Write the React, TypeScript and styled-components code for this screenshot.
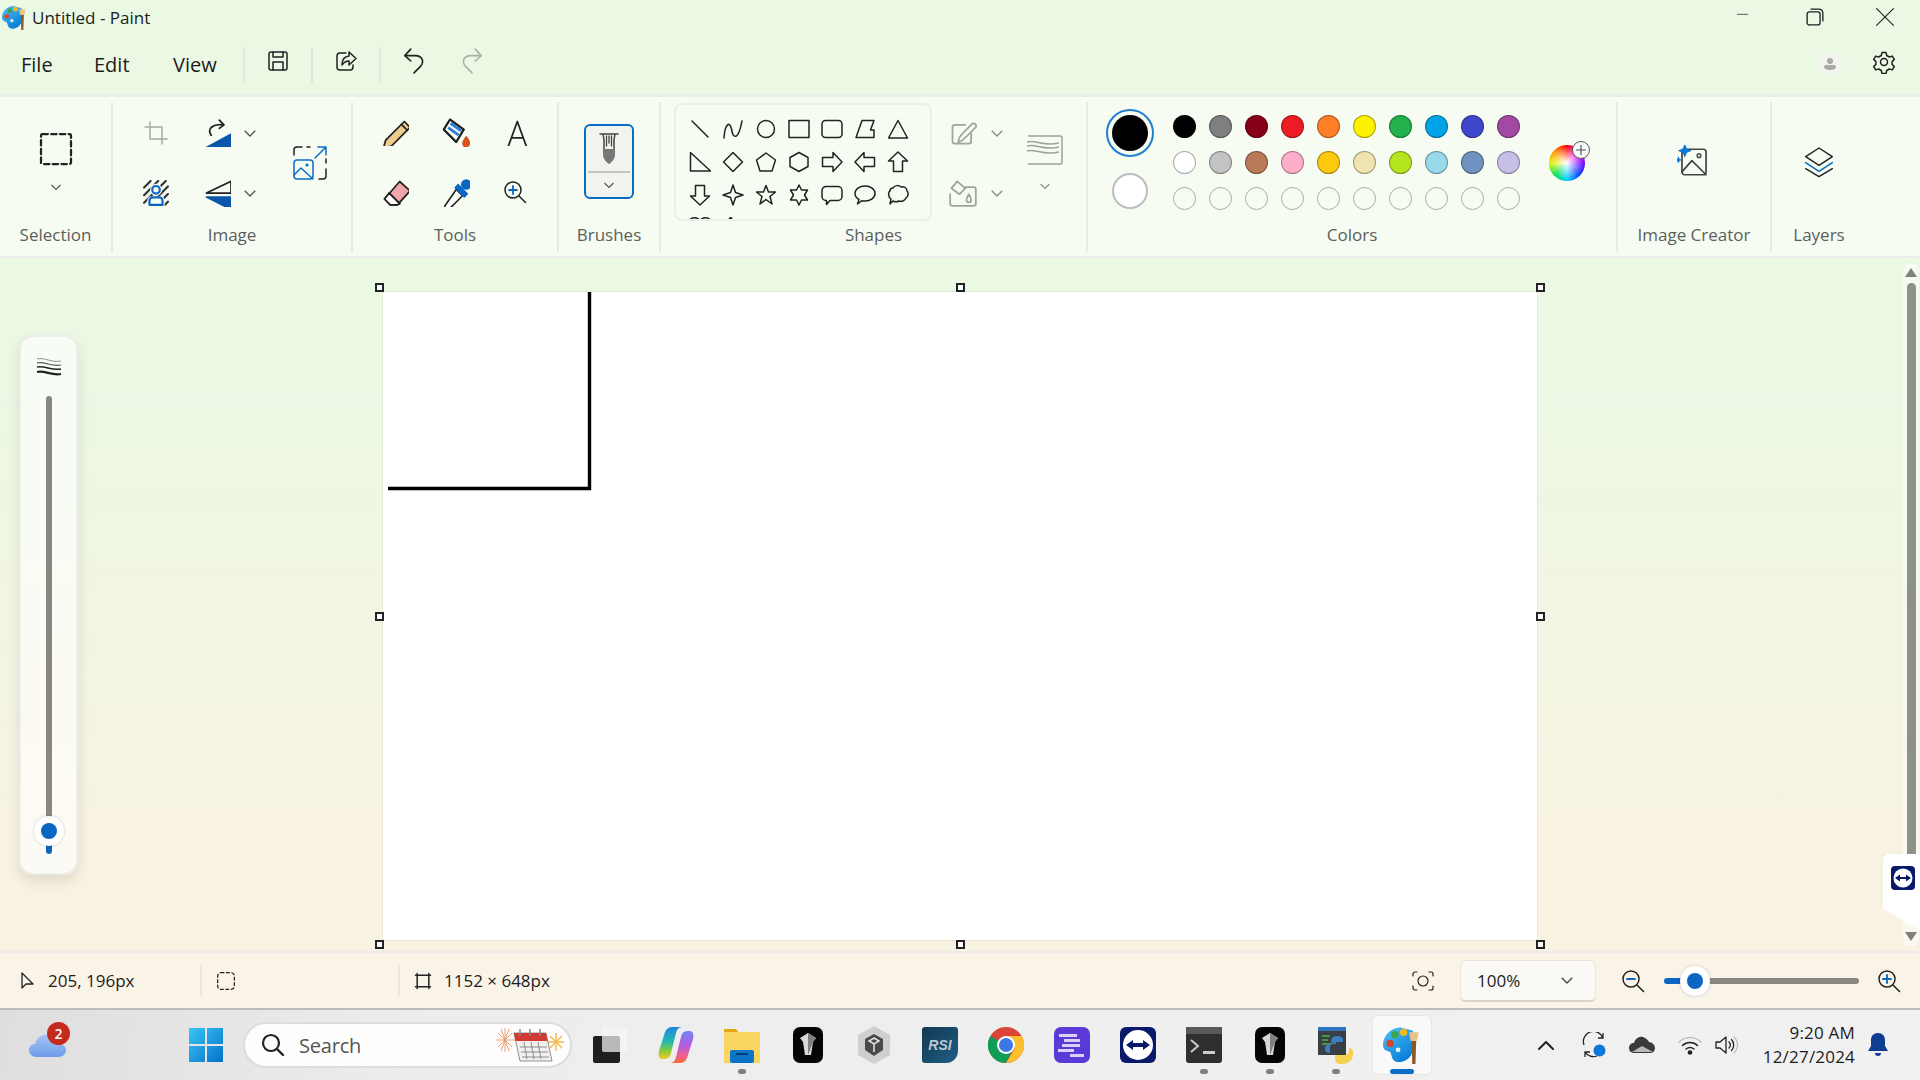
import React from 'react';
import styled, { createGlobalStyle } from 'styled-components';

const GlobalStyle = createGlobalStyle`
  html, body { margin: 0; padding: 0; width: 1920px; height: 1080px; overflow: hidden; }
  body { font-family: "Open Sans", "Noto Sans", "Liberation Sans", sans-serif; color: #1c1c1c; }
  * { box-sizing: border-box; }
`;

const Shell = styled.div`
  width: 1920px;
  height: 1080px;
  display: flex;
  flex-direction: column;
`;

const PaintWindow = styled.div`
  height: 1008px;
  display: flex;
  flex-direction: column;
  background: linear-gradient(180deg, #ebf8e4 0%, #ebf8e4 38%, #f2f5e3 62%, #f8f2e2 84%, #f9f2e3 100%);
`;

const TitleBar = styled.div`
  height: 34px;
  margin-bottom: 2px;
  display: flex;
  align-items: center;
  padding: 0 0 0 2px;
`;

const TitleText = styled.span`
  font-size: 17px;
  margin-left: 5px;
  margin-right: auto;
`;

const WindowButton = styled.div`
  width: 70px;
  height: 30px;
  display: flex;
  align-items: center;
  justify-content: center;
`;

const MenuBar = styled.div`
  height: 59px;
  display: flex;
  align-items: center;
  padding: 0 24px 2px 21px;
`;

const MenuItem = styled.span<{ $w: number }>`
  font-size: 20px;
  width: ${(p) => p.$w}px;
`;

const MenuSep = styled.div`
  width: 2px;
  height: 36px;
  background: #dfe8da;
`;

const MenuButton = styled.div<{ $w: number }>`
  width: ${(p) => p.$w}px;
  display: flex;
  justify-content: center;
  margin-bottom: 8px;
`;

const Avatar = styled.div`
  width: 23px;
  height: 23px;
  border-radius: 50%;
  background: #f2f5ef;
  margin-left: auto;
  margin-right: 31px;
  margin-bottom: 2px;
  display: flex;
  align-items: center;
  justify-content: center;
`;

const GearSlot = styled.div`
  margin-bottom: 6px;
`;

const Ribbon = styled.div`
  height: 163px;
  display: flex;
  background: #f6fcf2;
  border-top: 2px solid #ececec;
  border-bottom: 2px solid #ececec;
`;

const Group = styled.div<{ $w: number; $last?: boolean }>`
  width: ${(p) => p.$w}px;
  height: 150px;
  margin-top: 5px;
  display: flex;
  flex-direction: column;
  border-right: 2px solid ${(p) => (p.$last ? 'transparent' : '#e7ebe3')};
`;

const GroupBody = styled.div`
  height: 121px;
`;

const GroupLabel = styled.div`
  height: 24px;
  line-height: 24px;
  text-align: center;
  font-size: 17px;
  color: #5c5f5b;
`;

const SelectionColumn = styled.div`
  height: 100%;
  display: flex;
  flex-direction: column;
  align-items: center;
  padding-top: 29px;
  gap: 14px;
`;

const ImageGrid = styled.div`
  display: grid;
  grid-template-columns: 60px 76px 1fr;
  grid-template-rows: 60px 60px;
  padding: 1px 0 0 13px;
`;

const ToolsGrid = styled.div`
  display: grid;
  grid-template-columns: repeat(3, 60px);
  grid-template-rows: 60px 60px;
  padding: 0 0 0 12px;
`;

const Cell = styled.div`
  display: flex;
  align-items: center;
  justify-content: center;
`;

const SplitCell = styled.div`
  display: flex;
  align-items: center;
  padding-left: 8px;
`;

const SplitIcon = styled.div`
  width: 46px;
  display: flex;
  justify-content: center;
`;

const SplitChevron = styled.div`
  width: 20px;
  display: flex;
  justify-content: center;
`;

const ResizeCell = styled.div`
  grid-column: 3;
  grid-row: 1 / span 2;
  display: flex;
  align-items: center;
  justify-content: center;
  padding-left: 7px;
`;

const BrushButton = styled.div`
  width: 50px;
  height: 75px;
  margin: 22px 0 0 25px;
  border: 2px solid #0a6cc4;
  border-radius: 6px;
  background: #f1f3ee;
  display: flex;
  flex-direction: column;
  align-items: center;
`;

const BrushTop = styled.div`
  height: 47px;
  width: 42px;
  display: flex;
  align-items: center;
  justify-content: center;
  border-bottom: 2px solid #c4c7c0;
`;

const BrushBottom = styled.div`
  flex: 1;
  display: flex;
  align-items: center;
`;

const ShapesLayout = styled.div`
  display: flex;
  padding: 1px 0 0 13px;
`;

const ShapesBox = styled.div`
  width: 258px;
  height: 118px;
  border: 2px solid #ebefe7;
  border-radius: 8px;
  overflow: hidden;
  padding: 7px 0 0 7px;
`;

const ShapesGrid = styled.div`
  display: grid;
  grid-template-columns: repeat(7, 33px);
  grid-auto-rows: 33px;
`;

const ShapeOptions = styled.div`
  display: grid;
  grid-template-columns: 54px 14px 82px;
  grid-template-rows: 60px 60px;
  margin-left: 4px;
`;

const SizeCell = styled.div`
  grid-column: 3;
  grid-row: 1 / span 2;
  display: flex;
  flex-direction: column;
  align-items: center;
  padding-top: 32px;
  gap: 15px;
`;

const ColorsLayout = styled.div`
  display: flex;
  padding-left: 18px;
`;

const ActiveColors = styled.div`
  width: 48px;
  display: flex;
  flex-direction: column;
  align-items: center;
  padding-top: 7px;
`;

const ForegroundRing = styled.div`
  width: 48px;
  height: 48px;
  border-radius: 50%;
  border: 2px solid #1f7fd0;
  display: flex;
  align-items: center;
  justify-content: center;
`;

const ForegroundDot = styled.div`
  width: 36px;
  height: 36px;
  border-radius: 50%;
  background: #000;
`;

const BackgroundDot = styled.div`
  width: 36px;
  height: 36px;
  margin-top: 16px;
  border-radius: 50%;
  background: #fff;
  border: 2px solid #bdbdbd;
`;

const SwatchGrid = styled.div`
  display: grid;
  grid-template-columns: repeat(10, 36px);
  grid-auto-rows: 36px;
  margin: 6px 0 0 12px;
  height: 108px;
`;

const SwatchCell = styled.div`
  display: flex;
  align-items: center;
  justify-content: center;
`;

const Swatch = styled.div<{ $c?: string }>`
  width: 23px;
  height: 23px;
  border-radius: 50%;
  background: ${(p) => p.$c ?? 'transparent'};
  border: 1.5px solid ${(p) => (p.$c ? 'rgba(0,0,0,0.32)' : '#a9aca6')};
`;

const ColorWheel = styled.div`
  position: relative;
  width: 36px;
  height: 36px;
  margin: 43px 0 0 23px;
  border-radius: 50%;
  background: radial-gradient(circle, #ffffff 0%, rgba(255, 255, 255, 0) 68%),
    conic-gradient(#ff0000, #ff00e0, #7a00ff, #0040ff, #00d0ff, #00e050, #e8f000, #ff9000, #ff0000);
`;

const WheelPlus = styled.div`
  position: absolute;
  top: -4px;
  right: -5px;
  width: 18px;
  height: 18px;
  border-radius: 50%;
  background: #f8f8f8;
  border: 1.5px solid #55585a;
  display: flex;
  align-items: center;
  justify-content: center;
`;

const BigIconCell = styled.div`
  height: 100%;
  display: flex;
  align-items: center;
  justify-content: center;
  padding-bottom: 1px;
`;

const Workspace = styled.div`
  position: relative;
  height: 693px;
  display: grid;
  grid-template-columns: 383px 1154px 1fr;
`;

const SidePanel = styled.div`
  width: 59px;
  height: 540px;
  margin: 77px 0 0 19px;
  border-radius: 14px;
  border: 2px solid #ecedea;
  background: rgba(255, 255, 255, 0.62);
  box-shadow: 0 6px 14px rgba(0, 0, 0, 0.1);
  display: flex;
  flex-direction: column;
  align-items: center;
  padding-top: 20px;
`;

const SideTrack = styled.div`
  position: relative;
  width: 6px;
  height: 458px;
  margin-top: 19px;
  border-radius: 3px;
  background: linear-gradient(180deg, #8a8780 0 94%, #0a66c2 94% 100%);
`;

const SliderThumb = styled.div`
  position: absolute;
  width: 30px;
  height: 30px;
  border-radius: 50%;
  background: #fff;
  box-shadow: 0 0 3px rgba(0, 0, 0, 0.2);
  display: flex;
  align-items: center;
  justify-content: center;
  &::after {
    content: '';
    width: 16px;
    height: 16px;
    border-radius: 50%;
    background: #0a66c2;
  }
`;

const SideThumb = styled(SliderThumb)`
  left: -12px;
  bottom: 8px;
`;

const CanvasFrame = styled.div`
  position: relative;
  width: 1154px;
  height: 648px;
  margin-top: 34px;
  background: #fff;
  box-shadow: 0 0 0 1px rgba(120, 130, 110, 0.1);
`;

const Handle = styled.div<{ $x: number; $y: number }>`
  position: absolute;
  width: 9px;
  height: 9px;
  background: #fff;
  border: 2px solid #222;
  left: ${(p) => (p.$x === 0 ? '-8px' : p.$x === 1 ? 'calc(50% - 4.5px)' : 'calc(100% - 1px)')};
  top: ${(p) => (p.$y === 0 ? '-9px' : p.$y === 1 ? 'calc(50% - 4.5px)' : '100%')};
`;

const ScrollRail = styled.div`
  justify-self: end;
  width: 16px;
  height: 684px;
  margin: 5px 1px 0 0;
  background: rgba(255, 255, 255, 0.45);
  border-radius: 8px;
  display: flex;
  flex-direction: column;
  align-items: center;
  padding: 5px 0 6px;
`;

const ScrollThumb = styled.div`
  width: 9px;
  flex: 1;
  margin: 6px 0 8px;
  border-radius: 5px;
  background: #8c928a;
`;

const ViewerTab = styled.div`
  position: absolute;
  right: 0;
  top: 596px;
  width: 37px;
  height: 76px;
  background: #fff;
  border-top-left-radius: 5px;
  box-shadow: 0 0 0 1px rgba(0, 0, 0, 0.06);
  clip-path: polygon(0 0, 100% 0, 100% 100%, 0 72%);
  padding: 12px 0 0 8px;
`;

const StatusBar = styled.div`
  height: 57px;
  display: flex;
  align-items: center;
  background: #faf3e8;
  border-top: 2px solid #ececec;
  font-size: 17px;
  padding-right: 19px;
`;

const StatusCell = styled.div<{ $w: number; $pad: number }>`
  width: ${(p) => p.$w}px;
  height: 32px;
  display: flex;
  align-items: center;
  gap: 10px;
  padding-left: ${(p) => p.$pad}px;
  border-right: 2px solid #ebe6dd;
`;

const StatusPlain = styled(StatusCell)`
  border-right: none;
  gap: 11px;
`;

const ZoomTools = styled.div`
  margin-left: auto;
  display: flex;
  align-items: center;
`;

const ZoomDropdown = styled.div`
  width: 136px;
  height: 42px;
  margin: 0 25px;
  display: flex;
  align-items: center;
  justify-content: space-between;
  padding: 0 21px 0 16px;
  background: #fbf9f5;
  border: 1.5px solid #ebe4d9;
  border-bottom: 2px solid #d9d2c6;
  border-radius: 5px;
`;

const ZoomSlider = styled.div`
  position: relative;
  width: 195px;
  height: 6px;
  margin: 0 18px 0 19px;
  border-radius: 3px;
  background: linear-gradient(90deg, #0a66c2 0 16%, #8a8780 16% 100%);
`;

const ZoomThumb = styled(SliderThumb)`
  left: 16px;
  top: -12px;
`;

const Taskbar = styled.div`
  height: 72px;
  display: flex;
  align-items: center;
  background: linear-gradient(100deg, #dedede 0%, #ededed 22%, #f1f1f1 100%);
  border-top: 2px solid #bcbcbc;
  padding-right: 19px;
`;

const WeatherArea = styled.div`
  position: relative;
  width: 188px;
  padding-left: 29px;
`;

const Badge = styled.div`
  position: absolute;
  left: 47px;
  top: -10px;
  width: 23px;
  height: 23px;
  border-radius: 50%;
  background: #c42b1c;
  color: #fff;
  font-size: 14px;
  font-weight: 600;
  text-align: center;
  line-height: 23px;
`;

const SearchBox = styled.div`
  width: 329px;
  height: 46px;
  margin-left: 19px;
  display: flex;
  align-items: center;
  padding: 0 6px 0 16px;
  background: #fdfdfd;
  border: 2px solid #dcdcdc;
  border-radius: 23px;
`;

const SearchText = styled.span`
  margin-left: 14px;
  margin-right: auto;
  font-size: 20px;
  color: #555;
  letter-spacing: -0.2px;
`;

const AppStrip = styled.div`
  display: flex;
  margin-left: 5px;
`;

const AppTile = styled.div<{ $active?: boolean }>`
  position: relative;
  width: ${(p) => (p.$active ? 58 : 66)}px;
  height: 58px;
  margin: ${(p) => (p.$active ? '0 4px' : '0')};
  display: flex;
  align-items: center;
  justify-content: center;
  border-radius: 5px;
  background: ${(p) => (p.$active ? '#f9f9f9' : 'transparent')};
  box-shadow: ${(p) => (p.$active ? '0 0 0 1px #e6e6e6' : 'none')};
`;

const RunDot = styled.div`
  position: absolute;
  left: calc(50% - 4px);
  bottom: 0;
  width: 8px;
  height: 5px;
  border-radius: 3px;
  background: #7f7f7f;
`;

const ActiveBar = styled.div`
  position: absolute;
  left: calc(50% - 12px);
  bottom: 0;
  width: 24px;
  height: 5px;
  border-radius: 3px;
  background: #0a6cc4;
`;

const RsiTile = styled.div`
  width: 36px;
  height: 36px;
  display: flex;
  align-items: center;
  justify-content: center;
  border-radius: 3px 3px 12px 3px;
  background: linear-gradient(135deg, #12394f, #1f5e85);
  color: #b8c8d2;
  font: italic 700 14px "Liberation Sans", sans-serif;
`;

const Tray = styled.div`
  display: flex;
  align-items: center;
  margin-left: 87px;
`;

const TrayIcon = styled.div<{ $w: number }>`
  width: ${(p) => p.$w}px;
  display: flex;
  justify-content: center;
`;

const Clock = styled.div`
  margin-left: auto;
  text-align: right;
  font-size: 17px;
  line-height: 24px;
  letter-spacing: 0.2px;
`;

const BellArea = styled.div`
  width: 46px;
  display: flex;
  justify-content: center;
`;

type IconProps = { s?: number; w?: number; h?: number; vb?: string; children?: React.ReactNode };

const Svg: React.FC<IconProps> = ({ s = 24, w, h, vb = '0 0 24 24', children }) => (
  <svg
    width={w ?? s}
    height={h ?? s}
    viewBox={vb}
    fill="none"
    stroke="#222"
    strokeWidth={1.5}
    strokeLinecap="round"
    strokeLinejoin="round"
    style={{ display: 'block' }}
  >
    {children}
  </svg>
);

const Chevron: React.FC<{ s?: number; c?: string }> = ({ s = 12, c = '#555' }) => (
  <svg width={s} height={s} viewBox="0 0 12 12" fill="none" stroke={c} strokeWidth={1.2} style={{ display: 'block' }}>
    <path d="M1.5 4 6 8.5 10.5 4" />
  </svg>
);

const PaintLogo: React.FC<{ s: number }> = ({ s }) => (
  <svg width={s} height={s} viewBox="0 0 24 24" style={{ display: 'block' }}>
    <defs>
      <linearGradient id="palette" x1="0" y1="0" x2="0.6" y2="1">
        <stop offset="0" stopColor="#4fc3f7" />
        <stop offset="1" stopColor="#0b7fd6" />
      </linearGradient>
    </defs>
    <path d="M11 1C5 1 0 6 0 12c0 3 2 3.5 3.5 4 2 .6 1.5 2.5 2.5 4.5C7 23 10 23 12 22.5c5-1 7-5 7-9.5V3z" fill="url(#palette)" />
    <circle cx="4.5" cy="11" r="2.3" fill="#d9472b" />
    <circle cx="7.5" cy="5.5" r="2.3" fill="#3fa34d" />
    <circle cx="13" cy="4" r="2.3" fill="#f6b916" />
    <circle cx="9.5" cy="15" r="1.5" fill="#dff3ff" />
    <path d="M18 9h3l-.5 15h-2z" fill="#8a5a2b" />
    <path d="M16.5 4h6l-1 5.5h-4z" fill="#e8c48a" />
  </svg>
);

const SaveIcon = () => (
  <Svg>
    <path d="M5 3h14a2 2 0 0 1 2 2v14a2 2 0 0 1-2 2H5a2 2 0 0 1-2-2V5a2 2 0 0 1 2-2z" />
    <path d="M7 3v5h10V3M7 21v-8h10v8" />
  </Svg>
);

const ShareIcon = () => (
  <Svg>
    <path d="M12 4H6a3 3 0 0 0-3 3v11a3 3 0 0 0 3 3h10a3 3 0 0 0 3-3v-2" />
    <path d="M15 3l7 6.5-7 6.5v-4c-3 0-5 1-7 4 0-5 2-8.5 7-9z" />
  </Svg>
);

const UndoIcon = () => (
  <Svg s={26}>
    <path d="M9 1 3.5 7 9 12" />
    <path d="M4 7h9c8 0 8 7 5 10l-6 6" />
  </Svg>
);

const RedoIcon = () => (
  <Svg s={26}>
    <g stroke="#a9b2a6">
      <path d="M15 1l5.5 6L15 12" />
      <path d="M20 7h-9c-8 0-8 7-5 10l6 6" />
    </g>
  </Svg>
);

const GearIcon = () => (
  <Svg>
    <circle cx="12" cy="12" r="3.5" />
    <path d="M10 2.5h4l.7 3 2.6 1.5 3-.9 2 3.4-2.2 2.1v2.800l2.200 2.100-2 3.400-3-.9-2.600 1.500-.7 3h-4l-.7-3-2.600-1.500-3 .9-2-3.400 2.200-2.100v-2.800L1.700 9.500l2-3.400 3 .9L9.300 5.500z" />
  </Svg>
);

const SelectIcon: React.FC<{ s?: number; w?: number; h?: number }> = ({ s, w, h }) => (
  <Svg s={s} w={w} h={h}>
    <rect x="2" y="2" width="20" height="20" rx="1" strokeDasharray="3.6 2.2" />
  </Svg>
);

const CropIcon = () => (
  <Svg>
    <g stroke="#a4aaa2">
      <path d="M6 1v17h17M1 6h17v17" />
    </g>
  </Svg>
);

const RotateIcon = () => (
  <Svg s={28}>
    <path d="M2 25 24 13v12z" fill="#0a56aa" stroke="#0a56aa" />
    <path d="M7 14C3 8 9 4 17 5M14 1l4 4-4 3" />
  </Svg>
);

const BgRemoveIcon = () => (
  <Svg s={26}>
    <g stroke="#333" strokeWidth={2}>
      <path d="M1 7 7 1M1 14 14 1M1 21 21 1M6 23 23 6M13 23 23 13M20 23l3-3" />
    </g>
    <circle cx="12" cy="9" r="5.5" fill="#f6fcf2" stroke="none" />
    <path d="M4 24v-5a4 4 0 0 1 4-4h8a4 4 0 0 1 4 4v5z" fill="#f6fcf2" stroke="none" />
    <circle cx="12" cy="9" r="3.5" stroke="#0a66c2" strokeWidth={2} />
    <path d="M6 23v-4a3 3 0 0 1 3-3h6a3 3 0 0 1 3 3v4M6 23h12" stroke="#0a66c2" strokeWidth={2} />
  </Svg>
);

const FlipIcon = () => (
  <Svg s={28}>
    <path d="M24 2 3 12h21z" />
    <path d="M3 15.5h21V26z" fill="#0a56aa" stroke="#0a56aa" />
  </Svg>
);

const ResizeIcon = () => (
  <Svg s={36} vb="0 0 36 36">
    <path d="M2 10V5a3 3 0 0 1 3-3h5M15 2h3M34 24v7a3 3 0 0 1-3 3h-4M34 14v4" />
    <g stroke="#0a6cc4">
      <path d="M23 13 34 2M26 2h8v8" />
      <rect x="2" y="15" width="19" height="19" rx="3" />
      <path d="M2 30l7-7 12 11" />
      <circle cx="15" cy="20" r="0.8" />
    </g>
  </Svg>
);

const PencilIcon = () => (
  <Svg s={28}>
    <path d="M20 3l5 5L9 24l-7 2 2-7z" fill="#efcb8c" />
    <path d="M17.5 5.5l5 5" />
  </Svg>
);

const BucketIcon = () => (
  <Svg s={30}>
    <path d="M8 2 19 10l-6 10L3 10z" fill="#fff" />
    <path d="M8.5 5 17 11M6.5 8.500 15 14.500" stroke="#2c7fd1" strokeWidth={2.4} strokeLinecap="butt" />
    <path d="M8 2 19 10l-6 10L3 10z" />
    <path d="M21 16c-1.5 2.5-2.5 3.5-2.5 5a2.5 2.5 0 0 0 5 0c0-1.5-1-2.5-2.5-5z" fill="#d9531e" stroke="#d9531e" />
  </Svg>
);

const LetterIcon = () => (
  <Svg s={28}>
    <path d="M3 25h6M18 25h7M6 25 14 3l8 22M8.5 17h11" strokeLinecap="butt" />
  </Svg>
);

const EraserIcon = () => (
  <Svg s={28}>
    <path d="M16 3 25 11 14 23H8l-5-5z" fill="#f2a6ab" />
    <path d="M7 13l9 9M12 26h14" />
    <path d="M3 18l4-5 9 9-2 1H8z" fill="#fff" />
  </Svg>
);

const DropperIcon = () => (
  <Svg s={30}>
    <path d="M13 10 18 15 7 26l-4 1 1-4z" fill="#fff" strokeWidth={1.3} />
    <path d="M12 8.5l7.5 7.5 2.5-2.5-7.5-7.5z" fill="#0a66c2" stroke="#0a66c2" strokeWidth={1} />
    <circle cx="21" cy="6" r="3.5" fill="#0a66c2" stroke="#0a66c2" />
  </Svg>
);

const ZoomGlass: React.FC<{ sign: 'plus' | 'minus'; s?: number }> = ({ sign, s = 24 }) => (
  <Svg s={s}>
    <circle cx="10" cy="10" r="8" />
    <path d="M16 16l6.5 6.5" />
    <g stroke="#0a66c2" strokeWidth={1.8}>
      <path d="M6 10h8" />
      {sign === 'plus' && <path d="M10 6v8" />}
    </g>
  </Svg>
);

const BrushIcon = () => (
  <Svg w={24} h={36} vb="0 0 24 36">
    <path d="M3 3h18M6 3l1 6v12M18 3l-1 6v12" stroke="#444" strokeWidth={1.5} />
    <path d="M6 18h12v5c0 5-3 8-6 10-3-2-6-5-6-10z" fill="#777" stroke="none" />
    <path d="M9.5 5v10M12 5v7M14.5 5v10" stroke="#444" strokeWidth={1.3} />
  </Svg>
);

const SHAPES: React.ReactNode[] = [
  <path d="M3 3l16 16" />,
  <path d="M2 20C3 5 8 3 9.5 11c1 6 2 8 5 7 3-2 4-8 5.5-15" />,
  <circle cx="11" cy="11" r="8.5" />,
  <rect x="1" y="2.5" width="20" height="17" />,
  <rect x="1" y="2.5" width="20" height="17" rx="3.5" />,
  <path d="M8 2.5h12L16.5 12H20v7.5H2z" />,
  <path d="M11 2.5 20.5 20h-19z" />,
  <path d="M1.5 1.5V20h20z" />,
  <path d="M11 1.5 20.5 11 11 20.5 1.5 11z" />,
  <path d="M11 2 20.5 9 17 20H5L1.5 9z" />,
  <path d="M11 1.5 20 6.5v9l-9 5-9-5v-9z" />,
  <path d="M1.5 6.5H12V1.5L21 11l-9 9.5v-5H1.5z" />,
  <path d="M20.5 6.5H10V1.5L1 11l9 9.5v-5h10.5z" />,
  <path d="M6.5 20.5V10h-5L11 1l9.5 9h-5v10.5z" />,
  <path d="M6.5 1.5V12h-5L11 21l9.5-9h-5V1.5z" />,
  <path d="M11 1 13.5 8.5 21 11l-7.5 2.5L11 21l-2.5-7.5L1 11l7.5-2.5z" />,
  <path d="M11 1.5 13.5 8H20.5L15 12.5 17 20l-6-4.5L5 20l2-7.5L1.5 8H8.5z" />,
  <path d="M11 1 13.5 6H19.5L16.5 11 19.5 16H13.5L11 21 8.5 16H2.5L5.5 11 2.5 6H8.5z" />,
  <path d="M5 2.5h12a4 4 0 0 1 4 4v6a4 4 0 0 1-4 4h-8l-3.5 4v-4H5a4 4 0 0 1-4-4v-6a4 4 0 0 1 4-4z" />,
  <path d="M11 2c5.5 0 10 3 10 7.5S16.5 17 11 17c-1 0-2 0-3-.3L3.5 20 5 15.5C2.500 14 1 12 1 9.500 1 5 5.500 2 11 2z" />,
  <path d="M6 4c2-3 6-3 8-1 3-1 6 1 6 4 2 2 1 6-1 7-1 3-5 4-7 3-2 1-4 1-6 0l-3 3 1-5C1 13 1 8 3 7c0-2 1-3 3-3z" />,
  <path d="M11 20C4 14 .5 10 .5 5c0-5 8-6 10.5-1 2.5-5 10.5-4 10.5 1 0 5-3.500 9-10.500 15z" />,
  <path d="M9 0 2 8h6l-2 9 11-12h-6z" />,
];

const SizeWaves = () => (
  <svg width="36" height="30" viewBox="0 0 36 30" fill="none" stroke="#9ea39a" style={{ display: 'block' }}>
    <path d="M1 1h32a2 2 0 0 1 2 2v24a2 2 0 0 1-2 2H1" strokeWidth={1.5} />
    <path d="M0 7c8-3 16 5 32 1M0 11c8-3 16 5 32 1M0 16c8-3 16 5 32 1" strokeWidth={1.4} />
  </svg>
);

const SWATCHES: (string | undefined)[] = [
  '#000000', '#7f7f7f', '#880015', '#ed1c24', '#ff7f27', '#fff200', '#22b14c', '#00a2e8', '#3f48cc', '#a349a4',
  '#ffffff', '#c3c3c3', '#b97a57', '#ffaec9', '#ffc90e', '#efe4b0', '#b5e61d', '#99d9ea', '#7092be', '#c8bfe7',
  ...Array(10).fill(undefined),
];

const DarkGem = () => (
  <svg width="30" height="36" viewBox="0 0 30 36" style={{ display: 'block' }}>
    <rect width="30" height="36" rx="7" fill="#050505" />
    <path d="M7 11l8-5 8 5-3 4-2 13h-6l-2-13z" fill="#d8d8d8" />
    <path d="M15 6l8 5-3 4-5 13z" fill="#808080" />
  </svg>
);

const AppIcons: React.ReactNode[] = [
  <svg width="36" height="38" viewBox="0 0 36 38" style={{ display: 'block' }}>
    <defs>
      <linearGradient id="copA" x1="0" y1="0" x2="0" y2="1">
        <stop offset="0" stopColor="#1f86e0" />
        <stop offset="0.45" stopColor="#22b8b0" />
        <stop offset="0.75" stopColor="#8ccb3a" />
        <stop offset="1" stopColor="#f5c91f" />
      </linearGradient>
      <linearGradient id="copB" x1="0" y1="0" x2="0" y2="1">
        <stop offset="0" stopColor="#6f86f5" />
        <stop offset="0.45" stopColor="#b45ce0" />
        <stop offset="0.8" stopColor="#f0608a" />
        <stop offset="1" stopColor="#f5702f" />
      </linearGradient>
    </defs>
    <path d="M14 1h11c-4 0-6 2-7 6l-5 20c-1 4-3 6-7 6H4C1 33 0 29 1 25L7 6c1-3 4-5 7-5z" fill="url(#copA)" />
    <path d="M22 37H11c4 0 6-2 7-6l5-20c1-4 3-6 7-6h2c3 0 4 4 3 8l-6 19c-1 3-4 5-7 5z" fill="url(#copB)" />
  </svg>,
  <svg width="36" height="36" viewBox="0 0 36 36" style={{ display: 'block' }}>
    <path d="M0 2h12l3 4h21v30H0z" fill="#e4a612" />
    <rect y="5" width="36" height="31" fill="#fbd561" />
    <rect x="6" y="23" width="24" height="13" rx="2" fill="#0a74c9" />
    <rect x="12" y="26" width="12" height="2" fill="#053d74" />
  </svg>,
  <DarkGem />,
  <svg width="32" height="38" viewBox="0 0 32 38" style={{ display: 'block' }}>
    <path d="M16 0l16 9v20l-16 9-16-9V9z" fill="#cfcfcf" />
    <path d="M16 8l9 5v11l-9 6-9-6V13z" fill="#4a4a4a" />
    <path d="M16 12l5 3-5 3-5-3zM16 18v8" stroke="#e8e8e8" strokeWidth="1.5" fill="none" />
  </svg>,
  <RsiTile>RSI</RsiTile>,
  <svg width="36" height="36" viewBox="0 0 36 36" style={{ display: 'block' }}>
    <circle cx="18" cy="18" r="18" fill="#db4437" />
    <path d="M18 18 2.4 9A18 18 0 0 0 18 36l9-18z" fill="#0f9d58" />
    <path d="M18 9h15.6A18 18 0 0 1 18 36l9-15z" fill="#fbc02d" />
    <circle cx="18" cy="18" r="9" fill="#fff" />
    <circle cx="18" cy="18" r="7" fill="#3b78e7" />
  </svg>,
  <svg width="36" height="36" viewBox="0 0 36 36" style={{ display: 'block' }}>
    <rect width="36" height="36" rx="7" fill="#5a39d6" />
    <path d="M5 7h18v3H5zM10 12h16v3H10zM8 17h18v3H8zM4 22h16v3H4zM16 27h14v3H16z" fill="#d9d0fb" />
  </svg>,
  <svg width="36" height="36" viewBox="0 0 36 36" style={{ display: 'block' }}>
    <rect width="36" height="36" rx="6" fill="#0a1a6b" />
    <circle cx="18" cy="18" r="15" fill="#fff" />
    <path d="M6 18l7-5v3h10v-3l7 5-7 5v-3H13v3z" fill="#0a1a6b" />
  </svg>,
  <svg width="36" height="36" viewBox="0 0 36 36" style={{ display: 'block' }}>
    <rect width="36" height="36" rx="3" fill="#2f2f2f" />
    <rect width="36" height="7" fill="#5a5a5a" />
    <path d="M5 13l7 6-7 6" stroke="#ccc" strokeWidth="2" fill="none" />
    <rect x="17" y="24" width="12" height="3" fill="#ccc" />
  </svg>,
  <DarkGem />,
  <svg width="36" height="38" viewBox="0 0 36 38" style={{ display: 'block' }}>
    <rect x="0" y="1" width="28" height="28" fill="#3a3f46" />
    <rect x="0" y="1" width="28" height="4" fill="#2f74c0" />
    <path d="M4 10h8M4 14h6M4 18h10" stroke="#4fb04f" strokeWidth="1.5" />
    <path d="M12 27v-6c0-3 2-5 5-5h8v-3c0-1-2-3-5-3-5 0-7 2-7 6h5v2h-6c-3 0-5 2-5 5s2 4 5 4z" fill="#3b7fc0" />
    <path d="M24 38c-5 0-7-2-7-5v-4h9c3 0 5-2 5-5v-2c3 0 4 2 4 5 0 7-4 11-11 11z" fill="#f5d34f" />
  </svg>,
];

const handles: [number, number][] = [
  [0, 0], [1, 0], [2, 0],
  [0, 1], [2, 1],
  [0, 2], [1, 2], [2, 2],
];

const dots = [1, 8, 9, 10];

export default function App() {
  return (
    <Shell>
      <GlobalStyle />
      <PaintWindow>
        <TitleBar>
          <PaintLogo s={25} />
          <TitleText>Untitled - Paint</TitleText>
          <WindowButton>
            <Svg s={16}><path d="M0 8h16" strokeWidth={1.1} /></Svg>
          </WindowButton>
          <WindowButton>
            <Svg s={18} vb="0 0 16 16"><rect x="1" y="3.5" width="11.5" height="11.5" rx="2" strokeWidth={1.2} /><path d="M4.5 1h7a3.500 3.500 0 0 1 3.500 3.500v7" strokeWidth={1.2} /></Svg>
          </WindowButton>
          <WindowButton>
            <Svg s={18} vb="0 0 16 16"><path d="M.5.5l15 15M15.5.5l-15 15" strokeWidth={1} /></Svg>
          </WindowButton>
        </TitleBar>
        <MenuBar>
          <MenuItem $w={73}>File</MenuItem>
          <MenuItem $w={79}>Edit</MenuItem>
          <MenuItem $w={70}>View</MenuItem>
          <MenuSep />
          <MenuButton $w={66}><SaveIcon /></MenuButton>
          <MenuSep />
          <MenuButton $w={66}><ShareIcon /></MenuButton>
          <MenuSep />
          <MenuButton $w={66}><UndoIcon /></MenuButton>
          <MenuButton $w={50}><RedoIcon /></MenuButton>
          <Avatar>
            <svg width="14" height="14" viewBox="0 0 14 14" fill="#a8aaa6"><circle cx="7" cy="4" r="3" /><path d="M1 10c0-1 1-2 2-2h8c1 0 2 1 2 2 0 2-3 3-6 3s-6-1-6-3z" /></svg>
          </Avatar>
          <GearSlot><GearIcon /></GearSlot>
        </MenuBar>
        <Ribbon>
          <Group $w={113}>
            <GroupBody>
              <SelectionColumn>
                <SelectIcon w={36} h={36} />
                <Chevron />
              </SelectionColumn>
            </GroupBody>
            <GroupLabel>Selection</GroupLabel>
          </Group>
          <Group $w={240}>
            <GroupBody>
              <ImageGrid>
                <Cell><CropIcon /></Cell>
                <SplitCell><SplitIcon><RotateIcon /></SplitIcon><SplitChevron><Chevron s={14} /></SplitChevron></SplitCell>
                <ResizeCell><ResizeIcon /></ResizeCell>
                <Cell><BgRemoveIcon /></Cell>
                <SplitCell><SplitIcon><FlipIcon /></SplitIcon><SplitChevron><Chevron s={14} /></SplitChevron></SplitCell>
              </ImageGrid>
            </GroupBody>
            <GroupLabel>Image</GroupLabel>
          </Group>
          <Group $w={206}>
            <GroupBody>
              <ToolsGrid>
                <Cell><PencilIcon /></Cell>
                <Cell><BucketIcon /></Cell>
                <Cell><LetterIcon /></Cell>
                <Cell><EraserIcon /></Cell>
                <Cell><DropperIcon /></Cell>
                <Cell><ZoomGlass sign="plus" /></Cell>
              </ToolsGrid>
            </GroupBody>
            <GroupLabel>Tools</GroupLabel>
          </Group>
          <Group $w={102}>
            <GroupBody>
              <BrushButton>
                <BrushTop><BrushIcon /></BrushTop>
                <BrushBottom><Chevron /></BrushBottom>
              </BrushButton>
            </GroupBody>
            <GroupLabel>Brushes</GroupLabel>
          </Group>
          <Group $w={427}>
            <GroupBody>
              <ShapesLayout>
                <ShapesBox>
                  <ShapesGrid>
                    {SHAPES.map((shape, ix) => (
                      <Cell key={ix}><Svg s={22} vb="0 0 22 22">{shape}</Svg></Cell>
                    ))}
                  </ShapesGrid>
                </ShapesBox>
                <ShapeOptions>
                  <Cell>
                    <Svg s={28}>
                      <g stroke="#a0a49c">
                        <path d="M14 5H5a2 2 0 0 0-2 2v12a2 2 0 0 0 2 2h12a2 2 0 0 0 2-2v-7" />
                        <path d="M8 20c0-4 2-6 5-9l7-7c2-1 4 1 3 3l-8 8c-2 2-4 4-7 5z" />
                      </g>
                    </Svg>
                  </Cell>
                  <Cell><Chevron s={14} c="#8a8e86" /></Cell>
                  <SizeCell>
                    <SizeWaves />
                    <Chevron c="#8a8e86" />
                  </SizeCell>
                  <Cell>
                    <Svg s={28}>
                      <g stroke="#a0a49c">
                        <path d="M14 7h7a2 2 0 0 1 2 2v12a2 2 0 0 1-2 2H3a2 2 0 0 1-2-2v-8" />
                        <path d="M7 2l7 6-5 5-7-5zM17 13c-2 3-2 4-2 5a2 2 0 0 0 4 0c0-1 0-2-2-5z" />
                      </g>
                    </Svg>
                  </Cell>
                  <Cell><Chevron s={14} c="#8a8e86" /></Cell>
                </ShapeOptions>
              </ShapesLayout>
            </GroupBody>
            <GroupLabel>Shapes</GroupLabel>
          </Group>
          <Group $w={530}>
            <GroupBody>
              <ColorsLayout>
                <ActiveColors>
                  <ForegroundRing><ForegroundDot /></ForegroundRing>
                  <BackgroundDot />
                </ActiveColors>
                <SwatchGrid>
                  {SWATCHES.map((c, ix) => (
                    <SwatchCell key={ix}><Swatch $c={c} /></SwatchCell>
                  ))}
                </SwatchGrid>
                <ColorWheel>
                  <WheelPlus>
                    <svg width="12" height="12" viewBox="0 0 12 12" stroke="#555" strokeWidth="1.2"><path d="M6 1v10M1 6h10" /></svg>
                  </WheelPlus>
                </ColorWheel>
              </ColorsLayout>
            </GroupBody>
            <GroupLabel>Colors</GroupLabel>
          </Group>
          <Group $w={154}>
            <GroupBody>
              <BigIconCell>
                <Svg s={34} vb="1.5 2 24 24">
                  <rect x="5" y="5" width="17" height="18" rx="2" stroke="#444" strokeWidth={1.2} />
                  <path d="M5 21l7-8 10 10" stroke="#444" strokeWidth={1.2} />
                  <circle cx="17" cy="9.5" r="1.3" stroke="#444" strokeWidth={1} />
                  <path d="M7 1l1.5 3.5L12 6 8.5 7.5 7 11 5.5 7.5 2 6l3.5-1.5zM2.5 10l.8 1.7L5 12.5l-1.7.8L2.5 15l-.8-1.7L0 12.5l1.7-.8z" fill="#0a78d7" stroke="none" />
                </Svg>
              </BigIconCell>
            </GroupBody>
            <GroupLabel>Image Creator</GroupLabel>
          </Group>
          <Group $w={96} $last>
            <GroupBody>
              <BigIconCell>
                <Svg s={32}>
                  <path d="M12 1.5 22 8l-10 6.5L2 8z" strokeWidth={1.1} />
                  <path d="M2 12.5 12 19l10-6.5" stroke="#0a6cc4" strokeWidth={1.2} />
                  <path d="M2 17 12 23l10-6" strokeWidth={1.1} />
                </Svg>
              </BigIconCell>
            </GroupBody>
            <GroupLabel>Layers</GroupLabel>
          </Group>
        </Ribbon>
        <Workspace>
          <div>
            <SidePanel>
              <svg width="26" height="20" viewBox="0 0 26 20" fill="none" stroke="#222" style={{ display: 'block' }}>
                <path d="M1 2c8-2 14 4 24 2" strokeWidth="0.8" stroke="#777" />
                <path d="M1 6c8-2 14 4 24 2" strokeWidth="1.1" stroke="#555" />
                <path d="M1 10c8-2 14 4 24 2" strokeWidth="1.5" />
                <path d="M1 15c8-2 14 4 24 2" strokeWidth="2.2" />
              </svg>
              <SideTrack>
                <SideThumb />
              </SideTrack>
            </SidePanel>
          </div>
          <CanvasFrame>
            <svg width="1154" height="648" viewBox="0 0 1154 648" fill="none" style={{ display: 'block' }}>
              <path d="M206.5 0V196.5H5" stroke="#000" strokeWidth="3.4" />
            </svg>
            {handles.map(([x, y], ix) => (
              <Handle key={ix} $x={x} $y={y} />
            ))}
          </CanvasFrame>
          <ScrollRail>
            <svg width="12" height="9" viewBox="0 0 12 9" fill="#7d837b" style={{ display: 'block' }}><path d="M6 0l6 9H0z" /></svg>
            <ScrollThumb />
            <svg width="12" height="9" viewBox="0 0 12 9" fill="#7d837b" style={{ display: 'block' }}><path d="M6 9 0 0h12z" /></svg>
          </ScrollRail>
          <ViewerTab>
            <svg width="24" height="24" viewBox="0 0 24 24" style={{ display: 'block' }}>
              <rect width="24" height="24" rx="4" fill="#0a1a6b" />
              <circle cx="12" cy="12" r="9.5" fill="#fff" />
              <path d="M4 12l5-3.5V11h6V8.5l5 3.5-5 3.5V13H9v2.5z" fill="#0a1a6b" />
            </svg>
          </ViewerTab>
        </Workspace>
        <StatusBar>
          <StatusCell $w={202} $pad={18}>
            <Svg s={20} vb="0 0 20 20"><path d="M4 2v15l4-4 7 0z" strokeWidth={1.3} /></Svg>
            205, 196px
          </StatusCell>
          <StatusCell $w={198} $pad={14}>
            <Svg s={20}>
              <rect x="2" y="2" width="20" height="20" rx="4" strokeDasharray="3.5 3" />
            </Svg>
          </StatusCell>
          <StatusPlain $w={200} $pad={13}>
            <Svg s={20}>
              <path d="M5 3v18M19 3v18M3 5h18M3 19h18" strokeWidth={1.8} />
            </Svg>
            1152 × 648px
          </StatusPlain>
          <ZoomTools>
            <Svg s={24}>
              <path d="M2 7V5a2 2 0 0 1 2-2h2M18 3h2a2 2 0 0 1 2 2v2M22 17v2a2 2 0 0 1-2 2h-2M6 21H4a2 2 0 0 1-2-2v-2" strokeWidth={1.2} />
              <circle cx="12" cy="12" r="5" strokeWidth={1.2} />
            </Svg>
            <ZoomDropdown>
              100%
              <Chevron s={14} c="#444" />
            </ZoomDropdown>
            <ZoomGlass sign="minus" />
            <ZoomSlider><ZoomThumb /></ZoomSlider>
            <ZoomGlass sign="plus" />
          </ZoomTools>
        </StatusBar>
      </PaintWindow>
      <Taskbar>
        <WeatherArea>
          <svg width="38" height="26" viewBox="0 0 38 26" style={{ display: 'block' }}>
            <defs>
              <linearGradient id="cloud" x1="0" y1="0" x2="0" y2="1">
                <stop offset="0" stopColor="#a6c6f4" />
                <stop offset="1" stopColor="#6d9de8" />
              </linearGradient>
            </defs>
            <path d="M8 25C3 25 0 22 0 18c0-4 3-6 6-6 2-7 8-11 14-9 5 1 8 5 8 8 5 0 9 3 9 7s-3 7-8 7z" fill="url(#cloud)" />
          </svg>
          <Badge>2</Badge>
        </WeatherArea>
        <svg width="36" height="36" viewBox="0 0 36 36" style={{ display: 'block' }}>
          <defs>
            <linearGradient id="win" x1="0" y1="0" x2="1" y2="1">
              <stop offset="0" stopColor="#38c6f4" />
              <stop offset="1" stopColor="#0671c8" />
            </linearGradient>
          </defs>
          <path d="M1 1h16v16H1zM19 1h16v16H19zM1 19h16v16H1zM19 19h16v16H19z" fill="url(#win)" />
        </svg>
        <SearchBox>
          <Svg s={24}>
            <circle cx="10" cy="10" r="8" strokeWidth={2.2} />
            <path d="M16 16l6 6" strokeWidth={2.4} />
          </Svg>
          <SearchText>Search</SearchText>
          <svg width="68" height="40" viewBox="0 0 68 40" fill="none" style={{ display: 'block' }}>
            <g stroke="#f0a070" strokeWidth="1">
              <path d="M9 3v24M-1 15h20M2 8l14 14M16 8 2 22M5 4l8 22M13 4 5 26" />
            </g>
            <g stroke="#f4bc50" strokeWidth="1.5">
              <path d="M60 8v18M51 17h18M54 11l12 12M66 11 54 23" />
            </g>
            <path d="M18 8h32l6 28H24z" fill="#f2f0ee" stroke="#777" strokeWidth="0.8" />
            <path d="M18 8h32l1.5 8H19.5z" fill="#d23a34" />
            <path d="M24 22h27M25 27h27M26 32h27M28 17l3 17M35 17l3 17M42 17l3 17" stroke="#777" strokeWidth="0.8" />
            <path d="M24 4v7M34 4v7M44 4v7" stroke="#888" strokeWidth="1.5" />
          </svg>
        </SearchBox>
        <AppStrip>
          <AppTile>
            <svg width="36" height="36" viewBox="0 0 36 36" style={{ display: 'block' }}>
              <rect x="1" y="9" width="27" height="27" rx="2" fill="#1f1f1f" />
              <rect x="10" y="0" width="25" height="25" rx="2" fill="#f5f5f5" opacity="0.72" />
            </svg>
          </AppTile>
          {AppIcons.map((icon, ix) => (
            <AppTile key={ix}>
              {icon}
              {dots.includes(ix) && <RunDot />}
            </AppTile>
          ))}
          <AppTile $active>
            <PaintLogo s={38} />
            <ActiveBar />
          </AppTile>
        </AppStrip>
        <Tray>
          <TrayIcon $w={48}>
            <Svg s={20} vb="0 0 20 20"><path d="M3 14l7-7 7 7" strokeWidth={2} /></Svg>
          </TrayIcon>
          <TrayIcon $w={48}>
            <svg width="26" height="26" viewBox="0 0 26 26" fill="none" stroke="#222" strokeWidth="1.3" style={{ display: 'block' }}>
              <path d="M3 13A10 10 0 0 1 22 6M22 1v5h-5M4 25v-5h5M4 20a10 10 0 0 0 12 4" />
              <circle cx="18.5" cy="18.5" r="6" fill="#0a78d7" stroke="none" />
            </svg>
          </TrayIcon>
          <TrayIcon $w={48}>
            <svg width="26" height="18" viewBox="0 0 26 18" style={{ display: 'block' }}>
              <path d="M6 17C2 17 0 15 0 12c0-3 2-5 5-5 1-4 5-7 9-6 3 1 5 3 6 5 3 0 6 3 6 6 0 3-2 5-5 5z" fill="#3a3a3a" />
              <path d="M3 16 13 10l11 6z" fill="#b8b8b8" />
            </svg>
          </TrayIcon>
          <TrayIcon $w={48}>
            <Svg s={24}>
              <path d="M1 9c6-6 16-6 22 0" stroke="#b0b0b0" strokeWidth={1.2} />
              <path d="M4.5 12.5c4-4 11-4 15 0M8 16c2.5-2 5.5-2 8 0" strokeWidth={1.5} />
              <circle cx="12" cy="19.5" r="1.6" fill="#222" />
            </Svg>
          </TrayIcon>
          <TrayIcon $w={24}>
            <Svg s={26}>
              <path d="M2 9v6h4l6 5V4L6 9z" strokeWidth={1.3} />
              <path d="M15 9a4 4 0 0 1 0 6M17.5 6.5a8 8 0 0 1 0 11" strokeWidth={1.3} />
              <path d="M20 4a11 11 0 0 1 0 16" stroke="#b8b8b8" strokeWidth={1.2} />
            </Svg>
          </TrayIcon>
        </Tray>
        <Clock>
          <div>9:20 AM</div>
          <div>12/27/2024</div>
        </Clock>
        <BellArea>
          <svg width="22" height="26" viewBox="0 0 22 26" fill="#0f3d91" style={{ display: 'block' }}>
            <path d="M11 1c4.5 0 7 3 7 7v6l3 5H1l3-5V8c0-4 2.5-7 7-7zM8 21h6c0 2-1 3-3 3s-3-1-3-3z" />
          </svg>
        </BellArea>
      </Taskbar>
    </Shell>
  );
}
